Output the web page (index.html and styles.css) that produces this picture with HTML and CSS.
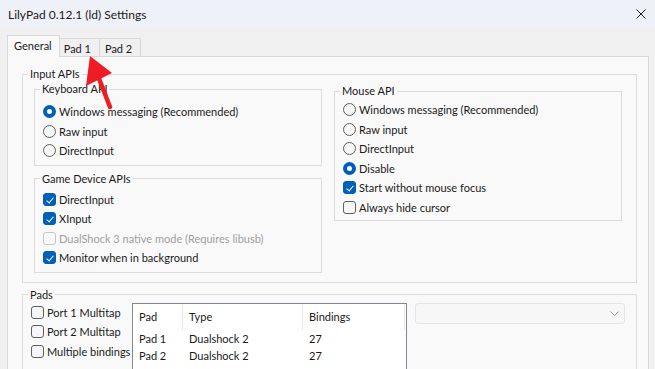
FILE: index.html
```html
<!DOCTYPE html>
<html lang="en">
<head>
	<meta charset="UTF-8">
	<title>LilyPad Settings</title>
	<link rel="stylesheet" href="styles.css">
</head>
<body>
	<div class="titlebar">
		<span class="title">LilyPad 0.12.1 (ld) Settings</span>
		<svg class="close" width="10" height="10" viewBox="0 0 10 10"><path d="M0.5 0.5L9.5 9.5M9.5 0.5L0.5 9.5" stroke="#1b1b1b" stroke-width="1"/></svg>
	</div>
	<div class="tabs">
		<div class="tab active">General</div>
		<div class="tab">Pad 1</div>
		<div class="tab">Pad 2</div>
	</div>
	<div class="panel">
		<fieldset class="group inputs">
			<legend>Input APIs</legend>
			<div class="cols">
				<div class="col">
					<fieldset class="group keyboard">
						<legend>Keyboard API</legend>
						<div class="opt"><span class="radio on"></span>Windows messaging (Recommended)</div>
						<div class="opt"><span class="radio"></span>Raw input</div>
						<div class="opt"><span class="radio"></span>DirectInput</div>
					</fieldset>
					<fieldset class="group gamedev">
						<legend>Game Device APIs</legend>
						<div class="opt"><span class="check on"></span>DirectInput</div>
						<div class="opt"><span class="check on"></span>XInput</div>
						<div class="opt disabled"><span class="check"></span>DualShock 3 native mode (Requires libusb)</div>
						<div class="opt"><span class="check on"></span>Monitor when in background</div>
					</fieldset>
				</div>
				<div class="col">
					<fieldset class="group mouse">
						<legend>Mouse API</legend>
						<div class="opt"><span class="radio"></span>Windows messaging (Recommended)</div>
						<div class="opt"><span class="radio"></span>Raw input</div>
						<div class="opt"><span class="radio"></span>DirectInput</div>
						<div class="opt"><span class="radio on"></span>Disable</div>
						<div class="opt"><span class="check on"></span>Start without mouse focus</div>
						<div class="opt"><span class="check"></span>Always hide cursor</div>
					</fieldset>
				</div>
			</div>
		</fieldset>
		<fieldset class="group pads">
			<legend>Pads</legend>
			<div class="pads-row">
				<div class="pad-opts">
					<div class="opt"><span class="check"></span>Port 1 Multitap</div>
					<div class="opt"><span class="check"></span>Port 2 Multitap</div>
					<div class="opt"><span class="check"></span>Multiple bindings</div>
				</div>
				<div class="listview">
					<div class="lv-head">
						<div>Pad</div>
						<div>Type</div>
						<div>Bindings</div>
					</div>
					<div class="lv-row">
						<div>Pad 1</div>
						<div>Dualshock 2</div>
						<div>27</div>
					</div>
					<div class="lv-row">
						<div>Pad 2</div>
						<div>Dualshock 2</div>
						<div>27</div>
					</div>
				</div>
				<div class="combo">
					<svg width="9" height="5" viewBox="0 0 9 5"><path d="M0.5 0.5L4.5 4.5L8.5 0.5" fill="none" stroke="#9b9b9b" stroke-width="1"/></svg>
				</div>
			</div>
		</fieldset>
	</div>
	<svg class="arrow" width="40" height="62" viewBox="80 50 40 62">
		<polygon points="90,56 86,86 112,73" fill="#ee1c24"/>
		<line x1="98" y1="76" x2="110" y2="107" stroke="#ee1c24" stroke-width="4.5" stroke-linecap="round"/>
	</svg>
</body>
</html>
```

FILE: styles.css
```css
*{
	margin:0;
	padding:0;
	box-sizing: border-box;
}
html,body{
	height: 369px;
	overflow: hidden;
}
body{
	background: #f0f0f0;
	font-family: Lato, 'Noto Sans', sans-serif;
	font-size: 11px;
	color: #1a1a1a;
	position: relative;
}
.titlebar{
	height: 28px;
	background: #eff1f8;
	display: flex;
	align-items: center;
	justify-content: space-between;
	padding: 0 9px 0 8px;
}
.title{
	font-size: 12px;
	line-height: 14px;
	margin-top: 1px;
}
.close{
	margin-top: -1px;
}
.tabs{
	height: 28px;
	display: flex;
	align-items: flex-end;
	padding: 0 7px;
}
.tab{
	height: 18px;
	padding: 2px 8px 0 4px;
	line-height: 16px;
	border: 1px solid #d9d9d9;
	border-bottom: none;
	border-left: none;
	background: #f0f0f0;
}
.tab + .tab + .tab{
	padding: 2px 8px 0 5px;
}
.tab.active{
	height: 22px;
	line-height: 20px;
	padding: 0 7px 0 6px;
	border-left: 1px solid #d9d9d9;
	background: #f9f9f9;
	margin-bottom: -1px;
	position: relative;
	z-index: 1;
}
.panel{
	margin: 0 6px 0 7px;
	height: 400px;
	border: 1px solid #d9d9d9;
	background: #f9f9f9;
	padding: 10px 11px 0 14px;
}
.group{
	border: 1px solid #dcdcdc;
	min-width: 0;
	padding-left: 0;
}
.group legend{
	font-size: 11px;
	line-height: 14px;
	padding: 0 2px;
	margin-left: 5px;
}
.inputs{
	padding: 1px 14px 9px 0;
}
.cols{
	display: grid;
	grid-template-columns: 288px 288px;
	column-gap: 12px;
	align-items: start;
	padding-left: 11px;
}
.keyboard{
	padding: 6px 8px 4px 0;
}
.gamedev{
	margin-top: 6px;
	padding: 4px 8px 4px 0;
}
.mouse{
	margin-top: 2px;
	padding: 2px 8px 3px 0;
}
.opt{
	height: 19.5px;
	display: flex;
	align-items: center;
	white-space: nowrap;
	padding-left: 8px;
}
.pad-opts .opt{
	padding-left: 0;
}
.opt.disabled{
	color: #a0a0a0;
}
.radio,.check{
	flex: none;
	width: 13px;
	height: 13px;
	margin-right: 3px;
	border: 1px solid #5f5f5f;
	background: #f6f6f6;
	position: relative;
}
.radio{
	border-radius: 50%;
}
.radio.on{
	border: 4px solid #005fb8;
	background: #fff;
}
.check{
	border-radius: 3px;
}
.check.on{
	background: #005fb8;
	border-color: #005fb8;
}
.check.on::after{
	content: "";
	position: absolute;
	left: 4px;
	top: 2px;
	width: 3px;
	height: 6px;
	border-right: 1px solid #fff;
	border-bottom: 1px solid #fff;
	transform: rotate(40deg);
}
.disabled .check{
	border-color: #c6c6c6;
	background: #f9f9f9;
}
.pads{
	margin-top: 5px;
	padding: 1px 8px 0 0;
	height: 120px;
}
.pads-row{
	display: grid;
	grid-template-columns: 101px 275px 218px;
	align-items: start;
	padding-left: 8px;
}
.listview{
	height: 90px;
	border: 1px solid #828790;
	background: #fff;
}
.lv-head,.lv-row{
	display: grid;
	grid-template-columns: 50px 120px 102px;
}
.lv-head div{
	height: 25px;
	line-height: 24px;
	padding-left: 6px;
	margin-top: 1px;
	border-right: 1px solid #e5e5e5;
}
.lv-row div{
	height: 17px;
	line-height: 17px;
	padding-left: 6px;
}
.combo{
	height: 21px;
	margin-left: 8px;
	border: 1px solid #e5e5e5;
	border-radius: 3px;
	background: #f7f7f7;
	display: flex;
	align-items: center;
	justify-content: flex-end;
	padding-right: 5px;
}
.arrow{
	position: absolute;
	left: 80px;
	top: 50px;
}
```
